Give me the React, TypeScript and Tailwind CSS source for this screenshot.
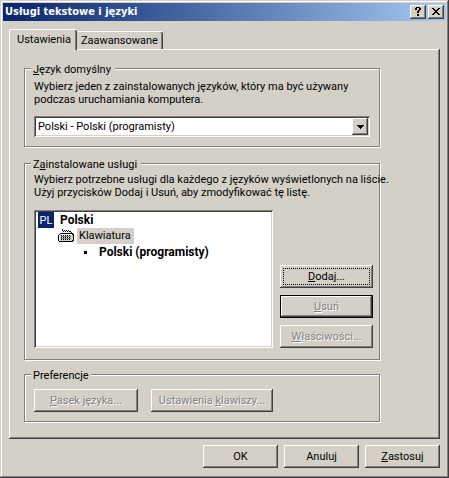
import { useState } from 'react';
import type { ButtonHTMLAttributes } from 'react';
import clsx from 'clsx';

const RAISED =
  'shadow-[inset_-1px_-1px_0_#404040,inset_1px_1px_0_#fff,inset_-2px_-2px_0_#808080]';
const RAISED_DEFAULT =
  'shadow-[inset_0_0_0_1px_#000,inset_-2px_-2px_0_#404040,inset_2px_2px_0_#fff,inset_-3px_-3px_0_#808080]';
const SUNKEN =
  'shadow-[inset_1px_1px_0_#808080,inset_-1px_-1px_0_#fff,inset_2px_2px_0_#404040,inset_-2px_-2px_0_#d4d0c8]';

type PushButtonProps = ButtonHTMLAttributes<HTMLButtonElement> & { framed?: boolean };

function PushButton({ className, framed, children, ...rest }: PushButtonProps) {
  return (
    <button
      type="button"
      className={clsx(
        'h-[23px] bg-[#d4d0c8] whitespace-nowrap disabled:text-[#808080] disabled:[text-shadow:1px_1px_0_#fff]',
        framed ? RAISED_DEFAULT : RAISED,
        className
      )}
      {...rest}
    >
      {children}
    </button>
  );
}

function GroupBox({
  title,
  className,
  children,
}: {
  title: React.ReactNode;
  className?: string;
  children: React.ReactNode;
}) {
  return (
    <fieldset
      className={clsx(
        'min-w-0 border border-[#808080] pl-[9px] shadow-[1px_1px_0_#fff,inset_1px_1px_0_#fff]',
        className
      )}
    >
      <legend className="-ml-[3px] bg-[#d4d0c8] pt-[2px] pr-[2px] pl-[2px]">{title}</legend>
      {children}
    </fieldset>
  );
}

function KeyboardIcon() {
  const keys = [6, 8, 10].flatMap((y) => [3, 5, 7, 9, 11].map((x) => ({ x, y })));
  return (
    <svg width="16" height="14" viewBox="0 0 16 14" shapeRendering="crispEdges" aria-hidden="true">
      <path
        d="M4 0h1v2h-1zM5 2h1v1h-1zM6 1h1v1h-1zM7 2h1v1h-1zM8 1h1v1h-1zM9 2h1v1h-1zM10 1h1v1h-1zM11 2h2v1h-2zM13 3h1v1h-1zM12 4h1v1h-1z"
        fill="#000"
      />
      <path d="M2 4h13v1h1v7h-1v1h-14v-1h-1v-6h1v-1h1z" fill="#000" />
      <path d="M2 5h12v1h1v5h-1v1h-13v-5h1z" fill="#d4d0c8" />
      <path d="M2 5h12v1h-12zM1 6h1v5h-1z" fill="#fff" />
      <path d="M3 7h10v1h-10zM3 9h10v1h-10z" fill="#808080" />
      {keys.map((k) => (
        <rect key={`${k.x}-${k.y}`} x={k.x} y={k.y} width="1" height="1" fill="#000" />
      ))}
    </svg>
  );
}

function TitleBar() {
  return (
    <header className="flex h-[18px] items-center bg-linear-to-r from-[#0a246a] to-[#a6caf0] px-[2px]">
      <h1 className="flex-1 truncate font-['DejaVu_Sans_Condensed','DejaVu_Sans',sans-serif] text-[11px] leading-[18px] font-bold text-white">
        Usługi tekstowe i języki
      </h1>
      <div className="flex gap-[2px]">
        <button type="button" aria-label="Pomoc" className={clsx('h-[14px] w-4 bg-[#d4d0c8]', RAISED)}>
          <svg width="16" height="14" viewBox="0 0 16 14" shapeRendering="crispEdges" aria-hidden="true">
            <path
              d="M6 2h4v1h-4zM5 3h2v2h-2zM9 3h2v2h-2zM8 5h2v1h-2zM7 6h2v2h-2zM7 9h2v2h-2z"
              fill="#000"
            />
          </svg>
        </button>
        <button type="button" aria-label="Zamknij" className={clsx('h-[14px] w-4 bg-[#d4d0c8]', RAISED)}>
          <svg width="16" height="14" viewBox="0 0 16 14" shapeRendering="crispEdges" aria-hidden="true">
            <path
              d="M4 3h2v1h-2zM10 3h2v1h-2zM5 4h2v1h-2zM9 4h2v1h-2zM6 5h4v1h-4zM7 6h2v1h-2zM6 7h4v1h-4zM5 8h2v1h-2zM9 8h2v1h-2zM4 9h2v1h-2zM10 9h2v1h-2z"
              fill="#000"
            />
          </svg>
        </button>
      </div>
    </header>
  );
}

export default function App() {
  const [tab, setTab] = useState('settings');

  return (
    <main className="flex min-h-screen flex-col bg-[#d4d0c8] p-[3px] font-[Roboto,'Liberation_Sans',sans-serif] text-[11px] leading-[13px] text-black shadow-[inset_-1px_-1px_0_#404040,inset_1px_1px_0_#d4d0c8,inset_-2px_-2px_0_#808080,inset_2px_2px_0_#fff]">
      <TitleBar />

      <div className="flex flex-1 flex-col px-[6px] pt-2 pb-[7px]">
        <div role="tablist" className="z-10 -mb-px flex items-end">
          <button
            type="button"
            role="tab"
            aria-selected={tab === 'settings'}
            onClick={() => setTab('settings')}
            className="h-[21px] rounded-t-[2px] border-t border-l border-white bg-[#d4d0c8] pr-[6px] pb-[1px] pl-[7px] shadow-[inset_-1px_0_0_#404040,inset_-2px_0_0_#808080]"
          >
            Ustawienia
          </button>
          <button
            type="button"
            role="tab"
            aria-selected={tab === 'advanced'}
            onClick={() => setTab('advanced')}
            className="mb-px h-[18px] rounded-tr-[2px] border-t border-white bg-[#d4d0c8] pr-[5px] pl-1 shadow-[inset_-1px_0_0_#404040,inset_-2px_0_0_#808080]"
          >
            Zaawansowane
          </button>
        </div>

        <section
          role="tabpanel"
          className={clsx('flex flex-1 flex-col pt-3 pr-[60px] pb-[17px] pl-[15px]', RAISED)}
        >
          <GroupBox
            title={
              <span className="pr-[2px]">
                <u>J</u>ęzyk domyślny
              </span>
            }
            className="pb-[9px]"
          >
            <p className="pt-1 whitespace-nowrap">
              Wybierz jeden z zainstalowanych języków, który ma być używany
              <br />
              podczas uruchamiania komputera.
            </p>
            <div className={clsx('relative mt-[10px] mr-[9px] bg-white p-[2px]', SUNKEN)}>
              <select
                aria-label="Język domyślny"
                className="block h-[17px] w-full appearance-none pl-[2px] outline-none"
              >
                <option>Polski - Polski (programisty)</option>
              </select>
              <span
                className={clsx(
                  'pointer-events-none absolute top-[2px] right-[2px] flex h-[17px] w-4 items-center justify-center bg-[#d4d0c8]',
                  RAISED
                )}
              >
                <svg width="7" height="4" viewBox="0 0 7 4" shapeRendering="crispEdges" aria-hidden="true">
                  <path d="M0 0h7v1h-7zM1 1h5v1h-5zM2 2h3v1h-3zM3 3h1v1h-1z" fill="#000" />
                </svg>
              </span>
            </div>
          </GroupBox>

          <GroupBox
            title={
              <span className="pr-[2px]">
                Z<u>a</u>instalowane usługi
              </span>
            }
            className="mt-[9px] flex-1 pb-[11px]"
          >
            <p className="pt-[2px] whitespace-nowrap">
              Wybierz potrzebne usługi dla każdego z języków wyświetlonych na liście.
              <br />
              Użyj przycisków Dodaj i Usuń, aby zmodyfikować tę listę.
            </p>
            <div className="mt-[11px] mr-[6px] flex gap-[7px]">
              <ul className={clsx('h-[138px] flex-1 bg-white py-[2px] pl-1', SUNKEN)}>
                <li className="flex h-4 items-center gap-[6px] text-[12px] font-bold">
                  <span className="flex size-4 items-center justify-center bg-[#0a246a] text-[11px] font-normal text-white">
                    PL
                  </span>
                  Polski
                </li>
                <li className="flex h-4 items-center gap-[3px] pl-5">
                  <KeyboardIcon />
                  <span className="h-4 bg-[#d4d0c8] pr-[3px] pl-[2px] leading-4">Klawiatura</span>
                </li>
                <li className="flex h-4 items-center gap-3 pl-[46px] text-[12px] font-bold">
                  <span className="size-[3px] bg-black" />
                  Polski (programisty)
                </li>
              </ul>
              <div className="flex w-[93px] flex-col justify-end gap-[7px]">
                <PushButton className="outline-1 -outline-offset-4 outline-black outline-dotted">
                  <u>D</u>odaj...
                </PushButton>
                <PushButton disabled framed>
                  <u>U</u>suń
                </PushButton>
                <PushButton disabled>
                  <u>W</u>łaściwości...
                </PushButton>
              </div>
            </div>
          </GroupBox>

          <GroupBox title="Preferencje" className="mt-[7px] pb-[9px]">
            <div className="flex gap-[13px] pt-[7px]">
              <PushButton disabled className="w-[104px]">
                <u>P</u>asek języka...
              </PushButton>
              <PushButton disabled className="w-[122px]">
                Ustawienia <u>k</u>lawiszy...
              </PushButton>
            </div>
          </GroupBox>
        </section>

        <footer className="mt-[6px] flex justify-end gap-[6px]">
          <PushButton className="w-[75px]">OK</PushButton>
          <PushButton className="w-[75px]">Anuluj</PushButton>
          <PushButton className="w-[75px]">
            <u>Z</u>astosuj
          </PushButton>
        </footer>
      </div>
    </main>
  );
}
